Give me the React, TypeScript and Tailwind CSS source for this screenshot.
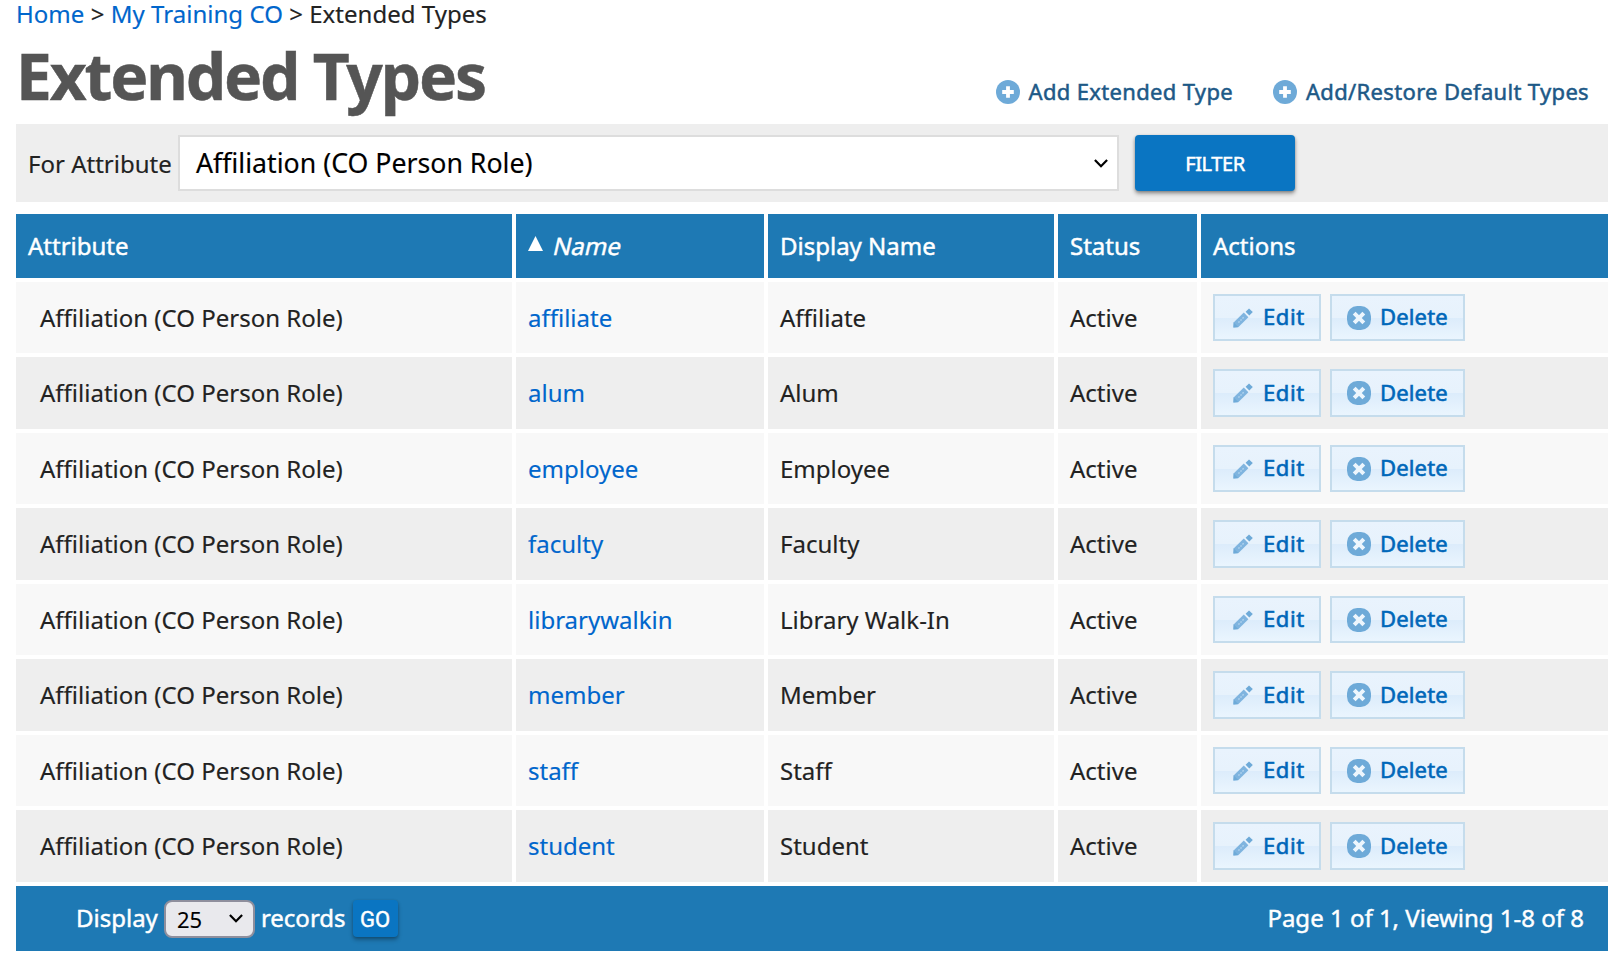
import type { ReactNode } from 'react';

const rows = [
  ['affiliate', 'Affiliate'],
  ['alum', 'Alum'],
  ['employee', 'Employee'],
  ['faculty', 'Faculty'],
  ['librarywalkin', 'Library Walk-In'],
  ['member', 'Member'],
  ['staff', 'Staff'],
  ['student', 'Student'],
];

const columns = 'grid grid-cols-[496px_248px_286px_139px_407px] gap-x-1';

function PlusIcon() {
  return (
    <svg className="size-6 shrink-0" viewBox="0 0 24 24" fill="none">
      <circle cx="12" cy="12" r="12" fill="#6eaad8" />
      <path d="M12 6.2v11.6M6.2 12h11.6" stroke="#fff" strokeWidth="3.8" />
    </svg>
  );
}

function CrossIcon() {
  return (
    <svg className="size-6 shrink-0" viewBox="0 0 24 24" fill="none">
      <rect width="24" height="24" rx="10.2" fill="#6eaad8" />
      <path d="M7.2 7.2l9.6 9.6M16.8 7.2l-9.6 9.6" stroke="#edf6fd" strokeWidth="4" />
    </svg>
  );
}

function PencilIcon() {
  return (
    <svg className="size-5 shrink-0" viewBox="0 0 20 20" fill="none">
      <path d="M0.4 19.6l0.2-5.2L10.8 4.6l4.6 4.6-10.2 10z" fill="#7fb4df" />
      <path d="M0.4 19.6l0.3-5 4.6 4.5z" fill="#6eaad8" />
      <path d="M5.4 14.6l5.6-5.6" stroke="#b4d5ef" strokeWidth="1.4" strokeDasharray="1.6 1.3" />
      <path d="M12.6 3.8l3.4-3.4L19.8 4l-3.5 3.5z" fill="#6eaad8" />
    </svg>
  );
}

function Chevron() {
  return (
    <svg className="h-[9px] w-[14px] shrink-0" viewBox="0 0 14 9" fill="none">
      <path d="M0.9 1.1L7 7.3l6.1-6.2" stroke="currentColor" strokeWidth="2.2" />
    </svg>
  );
}

function HeaderLink({ children }: { children: ReactNode }) {
  return (
    <a className="flex items-center gap-[9px] text-[22px] leading-6 tracking-[0.33px] text-[#1d5987] [-webkit-text-stroke:0.5px]">
      <PlusIcon />
      <span className="-mt-0.5">{children}</span>
    </a>
  );
}

function RowButton({ className, children }: { className: string; children: ReactNode }) {
  return (
    <button
      className={`flex h-full items-center border-2 border-[#c5dcec] bg-[linear-gradient(#e9f3fd_0%,#e7f2fc_50%,#dcecfb_51%,#eaf5fe_100%)] text-[22px] leading-6 text-[#0067b9] [-webkit-text-stroke:0.6px] ${className}`}
    >
      {children}
    </button>
  );
}

export default function App() {
  return (
    <div className="h-[968px] w-[1624px] overflow-hidden bg-white px-4 font-['Noto_Sans',sans-serif] text-2xl text-[#222] [-webkit-text-stroke:0.15px]">
      <nav className="h-7 leading-7 tracking-[0.03px] whitespace-nowrap">
        <a className="text-[#0066cc]">Home</a> &gt; <a className="text-[#0066cc]">My Training CO</a> &gt; Extended Types
      </nav>

      <header className="flex h-24 items-start justify-between pr-[19px]">
        <h1 className="mt-4 text-[64px] leading-[64px] font-bold tracking-[-2.15px] text-[#555] [-webkit-text-stroke:0.5px]">Extended Types</h1>
        <div className="mt-[52px] flex gap-10">
          <HeaderLink>Add Extended Type</HeaderLink>
          <HeaderLink>Add/Restore Default Types</HeaderLink>
        </div>
      </header>

      <section className="flex h-[78px] items-center bg-[#eee] pl-3">
        <label className="w-[150px] pt-0.5 whitespace-nowrap">For Attribute</label>
        <div className="flex h-14 w-[941px] items-center justify-between border-2 border-[#ddd] bg-white pr-[9px] pl-4 text-[26.7px] leading-8 text-black">
          <span>Affiliation (CO Person Role)</span>
          <span className="flex pt-px">
            <Chevron />
          </span>
        </div>
        <button className="ml-4 h-14 w-40 rounded-sm bg-[#0a75c2] pt-0.5 text-xl tracking-[-0.4px] text-white shadow-[0_3px_4px_rgba(0,0,0,0.3),0_1px_3px_rgba(0,0,0,0.25)] [-webkit-text-stroke:0.5px]">
          FILTER
        </button>
      </section>

      <main className="mt-3">
        <div className={`${columns} h-16 text-white [-webkit-text-stroke:0.45px] *:flex *:items-center *:bg-[#1e79b4] *:px-3`}>
          <div>Attribute</div>
          <div>
            <svg className="-mt-[5px] mr-[9px] h-[15px] w-[15px]" viewBox="0 0 15 15">
              <path d="M7.5 0L15 15H0z" fill="#fff" />
            </svg>
            <span className="inline-block origin-[0_75%] -skew-x-[13deg]">Name</span>
          </div>
          <div>Display Name</div>
          <div>Status</div>
          <div>Actions</div>
        </div>

        {rows.map(([name, display]) => (
          <div
            key={name}
            className={`${columns} mt-1 h-[71px] *:flex *:items-center *:bg-[#f8f8f8] *:px-3 nth-[odd]:h-[72px] nth-[odd]:*:bg-[#eee]`}
          >
            <div>
              <span className="pl-3">Affiliation (CO Person Role)</span>
            </div>
            <div>
              <a className="text-[#0066cc]">{name}</a>
            </div>
            <div>{display}</div>
            <div>Active</div>
            <div className="gap-[9px] py-3">
              <RowButton className="w-[108px] gap-[10px] pl-[18px] tracking-[0.6px]">
                <PencilIcon />
                <span className="-mt-[3px]">Edit</span>
              </RowButton>
              <RowButton className="w-[135px] gap-[9px] pl-[15px] tracking-[0.15px]">
                <CrossIcon />
                <span className="-mt-[3px]">Delete</span>
              </RowButton>
            </div>
          </div>
        ))}

        <footer className="mt-1 flex h-[65px] items-center justify-between bg-[#1e79b4] pr-6 pb-0.5 pl-[60px] text-white [-webkit-text-stroke:0.45px]">
          <div className="flex items-center">
            <span>Display</span>
            <span className="mt-0.5 ml-[6px] flex h-[38px] w-[91px] items-center justify-between rounded-lg border-2 border-[#8f8f9d] bg-[#e9e9ed] pr-[10px] pl-[11px] text-[22px] leading-6 text-black [-webkit-text-stroke:0.1px]">
              25
              <Chevron />
            </span>
            <span className="ml-[6px]">records</span>
            <button className="mt-0.5 ml-[7px] h-[37px] w-[45px] rounded-sm bg-[#0a75c2] pt-0.5 font-[Roboto,sans-serif] text-[22px] leading-6 text-white shadow-[0_3px_4px_rgba(0,0,0,0.25),0_1px_3px_rgba(0,0,0,0.2)]">
              GO
            </button>
          </div>
          <span>Page 1 of 1, Viewing 1-8 of 8</span>
        </footer>
      </main>
    </div>
  );
}
